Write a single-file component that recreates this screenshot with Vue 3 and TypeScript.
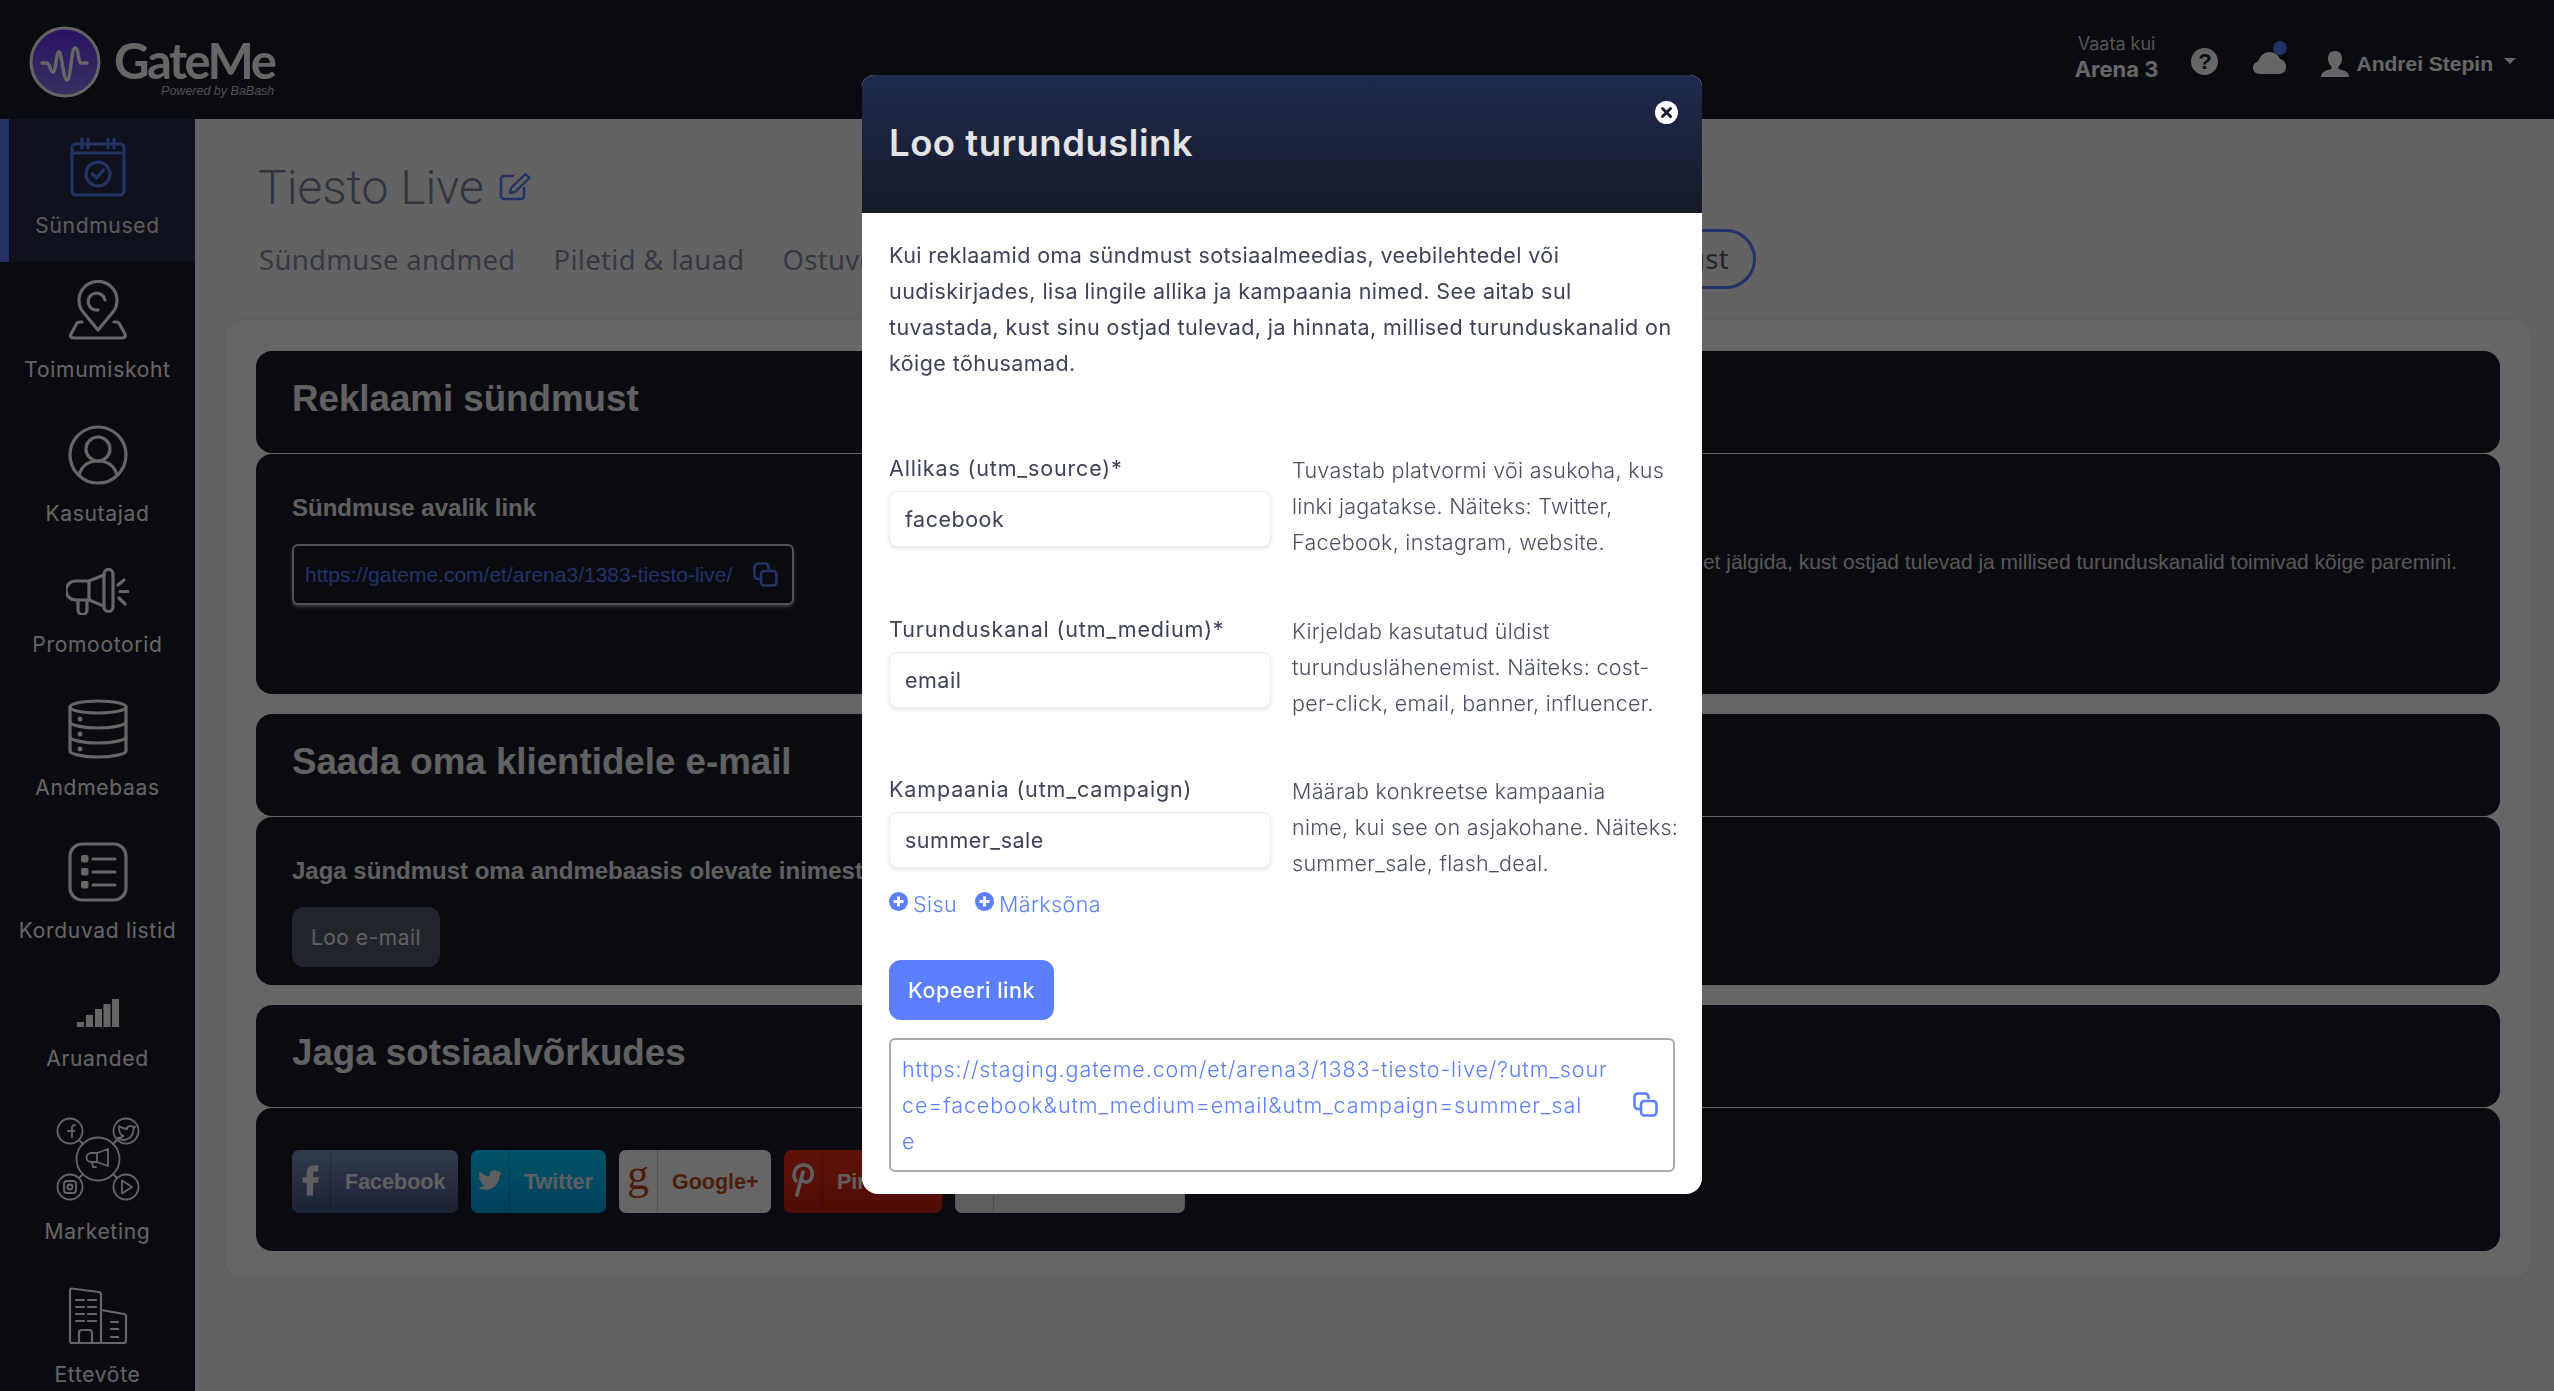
<template>
  <div class="page">
    <header class="topbar">
      <div class="logo">
        <svg width="72" height="72" viewBox="0 0 72 72">
          <defs>
            <linearGradient id="logoFill" x1="0" y1="0" x2="0" y2="1">
              <stop offset="0" stop-color="#6a32ff" />
              <stop offset="1" stop-color="#8f7cf0" />
            </linearGradient>
          </defs>
          <circle cx="36" cy="36" r="34" fill="url(#logoFill)" stroke="#fff" stroke-width="3" opacity="0.98" />
          <path d="M13 37h5c3 0 3 9 6 9s3-20 6-20 4 28 8 28 4-32 8-32 3 15 6 15h6" fill="none" stroke="#fff" stroke-width="3.4" stroke-linecap="round" stroke-linejoin="round" />
        </svg>
        <div class="logo-text">
          <span class="logo-name">GateMe</span>
          <span class="logo-sub">Powered by BaBash</span>
        </div>
      </div>
      <div class="top-right">
        <div class="view-as">
          <span class="view-small">Vaata kui</span>
          <span class="view-big">Arena 3</span>
        </div>
        <span class="help">?</span>
        <div class="cloud">
          <svg width="34" height="24" viewBox="0 0 34 24"><path d="M7 24C2 24 0 21 0 17.500c0-3 2-5.500 5-6C7 6 11 2 16 2c6 0 9 3 11 7 4 1 6 4 6 8 0 4-3 7-7 7z" fill="#fff" /></svg>
          <i class="cloud-dot"></i>
        </div>
        <div class="user">
          <svg width="28" height="26" viewBox="0 0 28 26"><path d="M14 0c4.500 0 7 3 7 7.500 0 3.500-1.500 6.500-3.500 8v2.500C22 19.500 28 20 28 26H0c0-6 6-6.500 10.500-8v-2.500C8.500 14 7 11 7 7.500 7 3 9.500 0 14 0z" fill="#fff" /></svg>
          <span>Andrei Stepin</span>
          <i class="caret"></i>
        </div>
      </div>
    </header>

    <div class="layout">
      <aside class="sidebar">
        <a
          v-for="item in menu"
          :key="item.key"
          class="side-item"
          :class="{ active: item.key === 'events' }"
          :style="{ height: item.height + 'px' }"
        >
          <span class="side-icon" :style="{ height: item.iconBox + 'px' }">
            <svg v-if="item.key === 'events'" width="56" height="60" viewBox="0 0 56 60" class="line">
              <rect x="2" y="7" width="52" height="51" rx="4" />
              <path d="M2 16h52M12 2v9M18 2v9M38 2v9M44 2v9" />
              <circle cx="28" cy="37" r="12" />
              <path d="M22.500 37l4 4 7-8" />
            </svg>
            <svg v-else-if="item.key === 'venue'" width="60" height="60" viewBox="0 0 60 60" class="line">
              <path d="M30 50L15 32a19 19 0 1 1 30 0z" />
              <path d="M37 20a8.500 8.500 0 1 0-7 10" />
              <path d="M14 42h-2c-2 0-3 1-3.500 2L3 54c-1 2 0 4 3 4h48c3 0 4-2 3-4l-5.500-10c-.5-1-1.500-2-3.500-2h-2" />
            </svg>
            <svg v-else-if="item.key === 'users'" width="60" height="60" viewBox="0 0 60 60" class="line">
              <circle cx="30" cy="30" r="28" />
              <circle cx="30" cy="24" r="12" />
              <path d="M11 50c3-10 10-14 19-14s16 4 19 14" />
            </svg>
            <svg v-else-if="item.key === 'promoters'" width="63" height="47" viewBox="0 0 63 47" class="line">
              <path d="M23 13H9.500a9.500 9.500 0 0 0 0 19H23z" />
              <path d="M23 13l15-6M23 32l15 6" />
              <rect x="38" y="1.500" width="9" height="42" rx="4.500" />
              <path d="M12 32v10a4.500 4.500 0 0 0 9 0V32" />
              <path d="M52 17l6-5M54 23.500h8M53 30l6 6" />
            </svg>
            <svg v-else-if="item.key === 'database'" width="60" height="60" viewBox="0 0 60 60" class="line">
              <ellipse cx="30" cy="8" rx="28" ry="6" />
              <path d="M2 8v44c0 3 13 6 28 6s28-3 28-6V8" />
              <path d="M2 23c0 3 13 6 28 6s28-3 28-6M2 38c0 3 13 6 28 6s28-3 28-6" />
              <g class="dots">
                <circle cx="12" cy="20" r="2.500" />
                <circle cx="12" cy="35" r="2.500" />
                <circle cx="12" cy="50" r="2.500" />
              </g>
            </svg>
            <svg v-else-if="item.key === 'lists'" width="60" height="60" viewBox="0 0 60 60" class="line">
              <rect x="2" y="2" width="56" height="56" rx="12" />
              <g class="dots">
                <rect x="13" y="13" width="7.500" height="7.500" rx="2" />
                <rect x="13" y="26" width="7.500" height="7.500" rx="2" />
                <rect x="13" y="39" width="7.500" height="7.500" rx="2" />
              </g>
              <path d="M25 17h22M25 30h22M25 43h22" />
            </svg>
            <svg v-else-if="item.key === 'reports'" width="42" height="28" viewBox="0 0 42 28">
              <rect x="0" y="23" width="7" height="5" fill="#fff" />
              <rect x="9" y="16" width="7" height="12" fill="#fff" />
              <rect x="18" y="10" width="7" height="18" fill="#fff" />
              <rect x="26.500" y="5" width="7" height="23" fill="#fff" />
              <rect x="35" y="0" width="7" height="28" fill="#fff" />
            </svg>
            <svg v-else-if="item.key === 'marketing'" width="84" height="84" viewBox="0 0 84 84" class="line thin">
              <circle cx="42" cy="42" r="21.500" />
              <circle cx="14" cy="14" r="12.500" />
              <circle cx="70" cy="14" r="12.500" />
              <circle cx="14" cy="70" r="12.500" />
              <circle cx="70" cy="70" r="12.500" />
              <path d="M23 23l4 4M61 23l-4 4M23 61l4-4M61 61l-4-4" />
              <path d="M16 20v-9c0-2 1-3 3-3M12 14h6" />
              <path d="M63 9c3 2 5 3 8 3 0-3 4-4 6-2l2-.5-1.500 2.500c0 7-5 11-10 11-2.500 0-4.500-1-6-2 3 0 5-1 6-2-3-1-5-5-4.500-10z" />
              <rect x="8" y="64" width="12" height="12" rx="3" />
              <circle cx="14" cy="70" r="2.500" />
              <path d="M66 63.500l10 6.500-10 6.500z" />
              <path d="M41 36l11-4v17l-11-4zM41 36h-6a4.500 4.500 0 0 0 0 9h6M36 45l1 5h3" />
            </svg>
            <svg v-else width="60" height="58" viewBox="0 0 60 58" class="line slim">
              <path d="M2 3c0-1 .5-1.500 1.500-1.500L31 5c1.500.2 2 1 2 2v49H4c-1.500 0-2-.5-2-2z" />
              <path d="M33 23l23 4c1.500.3 2 1 2 2v25c0 1.500-.5 2-2 2H33" />
              <path d="M8 13h8M20 13h8M8 20h8M20 20h8M8 27h8M20 27h8M8 34h8M20 34h8M43 35h7M43 42h7M43 50h7" />
              <path d="M11 56V46c0-2 1-3 3-3h7c2 0 3 1 3 3v10" />
            </svg>
          </span>
          <span class="side-label">{{ item.label }}</span>
        </a>
      </aside>

      <main class="content">
        <div class="title-row">
          <h1>Tiesto Live</h1>
          <svg width="34" height="30" viewBox="0 0 34 30" class="edit">
            <path d="M15 5H5a3 3 0 0 0-3 3v17a3 3 0 0 0 3 3h17a3 3 0 0 0 3-3V16" fill="none" stroke="currentColor" stroke-width="2.600" />
            <path d="M12 17L26.500 3l4 4L16 21l-5 1z" fill="none" stroke="currentColor" stroke-width="2.400" stroke-linejoin="round" />
          </svg>
        </div>
        <nav class="tabs">
          <span v-for="tab in tabs" :key="tab" class="tab">{{ tab }}</span>
          <span class="tab pill">Reklaami sündmust</span>
        </nav>

        <section class="panel">
          <div class="block">
            <div class="block-head">Reklaami sündmust</div>
            <div class="block-body promo-body">
              <div class="public-link">
                <div class="sub-title">Sündmuse avalik link</div>
                <div class="link-input">
                  <span>https://gateme.com/et/arena3/1383-tiesto-live/</span>
                  <svg width="25" height="25" viewBox="0 0 25 25" class="copy">
                    <path d="M7 17H5a3.500 3.500 0 0 1-3.500-3.500V5A3.500 3.500 0 0 1 5 1.500h7A3.500 3.500 0 0 1 15.500 5v2" />
                    <rect x="8" y="9" width="15.500" height="14.500" rx="3.500" />
                  </svg>
                </div>
              </div>
              <p class="promo-note">Turunduslingi loomine aitab sul täpsemalt, et jälgida, kust ostjad tulevad ja millised turunduskanalid toimivad kõige paremini.</p>
            </div>
          </div>

          <div class="block">
            <div class="block-head">Saada oma klientidele e-mail</div>
            <div class="block-body mail-body">
              <div class="sub-title">Jaga sündmust oma andmebaasis olevate inimestega</div>
              <button class="mail-btn">Loo e-mail</button>
            </div>
          </div>

          <div class="block">
            <div class="block-head">Jaga sotsiaalvõrkudes</div>
            <div class="block-body social-body">
              <a class="social facebook">
                <span class="social-icon">
                  <svg width="26" height="34" viewBox="4 2 16 24"><path d="M14 8h3V3.500h-3c-3 0-5 2-5 5V12H6v4h3v9h4.500v-9h3.500l.5-4h-4V9c0-.6.4-1 .5-1z" fill="currentColor" /></svg>
                </span>
                <span class="social-text">Facebook</span>
              </a>
              <a class="social twitter">
                <span class="social-icon">
                  <svg width="24" height="24" viewBox="0 0 24 24"><path d="M23.953 4.570a10 10 0 01-2.825.775 4.958 4.958 0 002.163-2.723c-.951.555-2.005.959-3.127 1.184a4.920 4.920 0 00-8.384 4.482C7.690 8.095 4.067 6.130 1.640 3.162a4.822 4.822 0 00-.666 2.475c0 1.710.870 3.213 2.188 4.096a4.904 4.904 0 01-2.228-.616v.060a4.923 4.923 0 003.946 4.827 4.996 4.996 0 01-2.212.085 4.936 4.936 0 004.604 3.417 9.867 9.867 0 01-6.102 2.105c-.390 0-.779-.023-1.170-.067a13.995 13.995 0 007.557 2.209c9.053 0 13.998-7.496 13.998-13.985 0-.210 0-.420-.015-.630A9.935 9.935 0 0024 4.590z" fill="currentColor" /></svg>
                </span>
                <span class="social-text">Twitter</span>
              </a>
              <a class="social google">
                <span class="social-icon g-letter">g</span>
                <span class="social-text">Google+</span>
              </a>
              <a class="social pinterest">
                <span class="social-icon">
                  <svg width="24" height="34" viewBox="0 0 24 34"><path d="M5 18C1 13 3 3 12 2c7-.5 10 5 9 11-1 6-7 8-10 4M12 9L6 32" fill="none" stroke="currentColor" stroke-width="3.600" stroke-linecap="round" /></svg>
                </span>
                <span class="social-text">Pinterest</span>
              </a>
              <a class="social other">
                <span class="social-icon"></span>
                <span class="social-text">E-mail</span>
              </a>
            </div>
          </div>
        </section>
      </main>
    </div>

    <div class="backdrop">
      <div class="modal">
        <div class="modal-head">
          <h2>Loo turunduslink</h2>
          <button class="close">
            <svg width="23" height="23" viewBox="0 0 23 23">
              <circle cx="11.500" cy="11.500" r="11.500" fill="#fff" />
              <path d="M7.500 7.500l8 8M15.500 7.500l-8 8" stroke="#1a1f33" stroke-width="3" stroke-linecap="round" />
            </svg>
          </button>
        </div>
        <div class="modal-body">
          <p class="intro">Kui reklaamid oma sündmust sotsiaalmeedias, veebilehtedel või uudiskirjades, lisa lingile allika ja kampaania nimed. See aitab sul tuvastada, kust sinu ostjad tulevad, ja hinnata, millised turunduskanalid on kõige tõhusamad.</p>

          <div v-for="row in fields" :key="row.label" class="field-row">
            <div>
              <label>{{ row.label }}</label>
              <input type="text" :value="row.value" />
            </div>
            <p class="hint">{{ row.hint }}</p>
          </div>

          <div class="extras">
            <a v-for="extra in extras" :key="extra">
              <svg width="19" height="19" viewBox="0 0 19 19">
                <circle cx="9.500" cy="9.500" r="9.500" fill="currentColor" />
                <path d="M9.500 4.500v10M4.500 9.500h10" stroke="#fff" stroke-width="3" />
              </svg>
              {{ extra }}
            </a>
          </div>

          <button class="copy-btn">Kopeeri link</button>

          <div class="result">
            <span class="result-url">{{ resultUrl }}</span>
            <svg width="25" height="25" viewBox="0 0 25 25" class="copy">
              <path d="M7 17H5a3.500 3.500 0 0 1-3.500-3.500V5A3.500 3.500 0 0 1 5 1.500h7A3.500 3.500 0 0 1 15.500 5v2" />
              <rect x="8" y="9" width="15.500" height="14.500" rx="3.500" />
            </svg>
          </div>
        </div>
      </div>
    </div>
  </div>
</template>

<script setup lang="ts">
const menu = [
  { key: "events", label: "Sündmused", height: 143, iconBox: 60 },
  { key: "venue", label: "Toimumiskoht", height: 145, iconBox: 61 },
  { key: "users", label: "Kasutajad", height: 143, iconBox: 60 },
  { key: "promoters", label: "Promootorid", height: 131, iconBox: 48 },
  { key: "database", label: "Andmebaas", height: 143, iconBox: 60 },
  { key: "lists", label: "Korduvad listid", height: 157, iconBox: 60 },
  { key: "reports", label: "Aruanded", height: 118, iconBox: 31 },
  { key: "marketing", label: "Marketing", height: 170, iconBox: 86 },
  { key: "company", label: "Ettevõte", height: 143, iconBox: 59 },
];

const tabs = ["Sündmuse andmed", "Piletid & lauad", "Ostuvorm"];

// line breaks as in the design, the substitute font wraps differently
const fields = [
  {
    label: "Allikas (utm_source)*",
    value: "facebook",
    hint: "Tuvastab platvormi või asukoha, kus\nlinki jagatakse. Näiteks: Twitter,\nFacebook, instagram, website.",
  },
  {
    label: "Turunduskanal (utm_medium)*",
    value: "email",
    hint: "Kirjeldab kasutatud üldist\nturunduslähenemist. Näiteks: cost-\nper-click, email, banner, influencer.",
  },
  {
    label: "Kampaania (utm_campaign)",
    value: "summer_sale",
    hint: "Määrab konkreetse kampaania\nnime, kui see on asjakohane. Näiteks:\nsummer_sale, flash_deal.",
  },
];

const extras = ["Sisu", "Märksõna"];

const resultUrl = [
  "https://staging.gateme.com/et/arena3/1383-tiesto-live/?utm_sour",
  "ce=facebook&utm_medium=email&utm_campaign=summer_sal",
  "e",
].join("\n");
</script>

<style>
html,
body {
  margin: 0;
  background: #f8f8f8;
}
</style>

<style scoped>
.page {
  height: 100vh;
  overflow: hidden;
  display: flex;
  flex-direction: column;
  background: #f8f8f8;
  font-family: "Liberation Sans", Arial, sans-serif;
}

.topbar {
  height: 119px;
  flex: none;
  display: flex;
  justify-content: space-between;
  align-items: center;
  padding: 0 38px 0 29px;
  background: #191d2c;
  color: #fff;
}

.logo {
  display: flex;
  align-items: center;
  gap: 13px;
  margin-top: 4px;
}

.logo-text {
  display: flex;
  flex-direction: column;
  align-items: flex-end;
  padding-top: 12px;
}

.logo-name {
  font-family: Lato, sans-serif;
  font-size: 49px;
  line-height: 44px;
  letter-spacing: -2.500px;
  font-weight: 700;
}

.logo-sub {
  font-style: italic;
  font-size: 12.500px;
  line-height: 14px;
  color: #c8c8c8;
  margin-top: 2px;
}

.top-right {
  display: flex;
  align-items: center;
  padding-top: 8px;
}

.view-as {
  display: flex;
  flex-direction: column;
  align-items: center;
  font-family: Inter, sans-serif;
  margin-right: 33px;
  margin-top: -14px;
}

.view-small {
  font-size: 18px;
  line-height: 24px;
  color: #d0d0d0;
}

.view-big {
  font-size: 22px;
  line-height: 26px;
  font-weight: 700;
}

.help {
  width: 27px;
  height: 27px;
  border-radius: 50%;
  background: #fff;
  color: #191d2c;
  font-size: 22px;
  font-weight: 700;
  line-height: 27px;
  text-align: center;
  margin-right: 35px;
  margin-top: -4px;
}

.cloud {
  position: relative;
  width: 34px;
  height: 24px;
  margin-right: 34px;
  margin-top: -4px;
}

.cloud svg {
  display: block;
}

.cloud-dot {
  position: absolute;
  top: -9px;
  right: 0;
  width: 14px;
  height: 14px;
  border-radius: 50%;
  background: #5b7fff;
}

.user {
  display: flex;
  align-items: center;
  gap: 7px;
  font-size: 21px;
  font-weight: 700;
}

.caret {
  width: 0;
  height: 0;
  border: 6px solid transparent;
  border-top-color: #fff;
  border-bottom-width: 0;
  margin-left: 4px;
  margin-top: -5px;
}

.layout {
  flex: 1;
  display: flex;
  min-height: 0;
}

.sidebar {
  width: 195px;
  flex: none;
  background: #191d2c;
  color: #fff;
  font-family: Inter, sans-serif;
}

.side-item {
  display: flex;
  flex-direction: column;
  align-items: center;
  padding-top: 18px;
  box-sizing: border-box;
}

.side-item.active {
  background: #262b49;
  box-shadow: inset 9px 0 0 #5b7fff;
  color: #e6e6e6;
}

.side-item.active .side-icon {
  color: #5b7fff;
}

.side-icon {
  display: block;
  color: #fff;
}

.side-icon svg {
  display: block;
}

.line {
  fill: none;
  stroke: currentColor;
  stroke-width: 3.200;
  stroke-linecap: round;
  stroke-linejoin: round;
}

.line.thin {
  stroke-width: 1.800;
}

.line.slim {
  stroke-width: 2.200;
}

.dots {
  fill: currentColor;
  stroke: none;
}

.side-label {
  margin-top: 14px;
  font-size: 21px;
  line-height: 30px;
  letter-spacing: 0.700px;
  white-space: nowrap;
}

.content {
  flex: 1;
  min-width: 0;
  padding: 0 23px 0 30px;
}

.title-row {
  display: flex;
  align-items: center;
  gap: 15px;
  margin: 37px 0 0 33px;
  height: 62px;
}

.title-row h1 {
  margin: 0;
  font-family: Roboto, sans-serif;
  font-size: 48px;
  font-weight: 300;
  color: #7d86a0;
}

.edit {
  color: #5b7fff;
  margin-top: -2px;
}

.tabs {
  display: flex;
  align-items: center;
  gap: 38px;
  width: 1497px;
  height: 60px;
  margin: 11px 0 31px 34px;
  font-family: "Noto Sans", sans-serif;
  font-size: 27.500px;
  letter-spacing: 0.300px;
  color: #8890a8;
}

.tab {
  white-space: nowrap;
}

.pill {
  margin-left: auto;
  height: 60px;
  line-height: 54px;
  padding: 0 24px;
  box-sizing: border-box;
  border: 3px solid #5b7fff;
  border-radius: 30px;
  color: #5a6070;
}

.panel {
  padding: 31px 31px 26px;
  border-radius: 18px;
  background: #fff;
  box-shadow: 0 0 4px rgba(0, 0, 0, 0.08);
  display: flex;
  flex-direction: column;
  gap: 20px;
}

.block {
  color: #fff;
}

.block-head {
  height: 102px;
  box-sizing: border-box;
  padding: 0 36px 6px;
  display: flex;
  align-items: center;
  border-radius: 16px;
  background: #191d2c;
  font-size: 36.700px;
  font-weight: 700;
  color: #f2f2f2;
}

.block-body {
  margin-top: 1px;
  border-radius: 16px;
  background: #191d2c;
  box-sizing: border-box;
  padding: 0 36px;
}

.promo-body {
  height: 240px;
  display: flex;
  justify-content: space-between;
}

.public-link {
  padding-top: 40px;
}

.sub-title {
  font-size: 24px;
  line-height: 28px;
  font-weight: 700;
  color: #f0f0f0;
  white-space: nowrap;
}

.link-input {
  width: 502px;
  height: 61px;
  margin-top: 22px;
  box-sizing: border-box;
  padding: 0 14px 0 11px;
  display: flex;
  align-items: center;
  justify-content: space-between;
  border: 2px solid #cfcfcf;
  border-radius: 6px;
  box-shadow: 0 2px 3px rgba(255, 255, 255, 0.5);
  font-size: 21px;
  color: #5b7fff;
}

.copy {
  flex: none;
  fill: none;
  stroke: #5b7fff;
  stroke-width: 2.600;
}

.promo-note {
  margin: 95px 7px 0 0;
  white-space: nowrap;
  font-size: 21px;
  line-height: 26px;
  color: #dcdcdc;
}

.mail-body {
  height: 168px;
  padding-top: 40px;
}

.mail-btn {
  display: block;
  width: 148px;
  height: 60px;
  margin-top: 22px;
  border: 0;
  border-radius: 12px;
  background: #565a6c;
  color: #f0f0f0;
  font-family: Inter, sans-serif;
  font-size: 21px;
  letter-spacing: 0.500px;
}

.social-body {
  height: 143px;
  padding-top: 42px;
  display: flex;
  gap: 13px;
  white-space: nowrap;
}

.social {
  height: 63px;
  display: flex;
  align-items: center;
  border-radius: 7px;
  font-size: 21.500px;
  font-weight: 700;
}

.social-icon {
  width: 38px;
  height: 66px;
  flex: none;
  display: flex;
  align-items: center;
  justify-content: center;
  margin-top: -3px;
  border-right: 1px solid rgba(0, 0, 0, 0.18);
  box-sizing: content-box;
}

.social-text {
  padding: 2px 16px 0 14px;
}

.facebook {
  width: 166px;
  background: linear-gradient(#7b90c3, #465686);
  color: #eee;
}

.twitter {
  width: 135px;
  background: linear-gradient(#00cdff, #009de6);
  color: #eee;
}

.google {
  width: 152px;
  background: #fff;
  color: #bf4a1a;
}

.g-letter {
  font-family: "Liberation Serif", serif;
  font-size: 44px;
  font-weight: 400;
  padding-bottom: 12px;
  height: 54px;
}

.pinterest {
  width: 158px;
  background: linear-gradient(#ec3014, #c82012);
  color: #eee;
}

.other {
  width: 230px;
  background: #ececec;
  color: #fff;
}

.backdrop {
  position: fixed;
  inset: 0;
  display: flex;
  justify-content: center;
  align-items: flex-start;
  padding-left: 10px;
  box-sizing: border-box;
  background: rgba(0, 0, 0, 0.6);
}

.modal {
  width: 840px;
  height: 1119px;
  margin-top: 75px;
  border-radius: 12px 12px 16px 16px;
  overflow: hidden;
  background: #fff;
  font-family: Inter, sans-serif;
  color: #3d4258;
}

.modal-head {
  position: relative;
  height: 138px;
  box-sizing: border-box;
  padding: 42px 27px 0;
  background: linear-gradient(#1f2a4f, #161a28);
  color: #e4e4e4;
}

.modal-head h2 {
  margin: 0;
  font-size: 36.500px;
  line-height: 52px;
  font-weight: 600;
  letter-spacing: 0.500px;
}

.close {
  position: absolute;
  top: 26px;
  right: 24px;
  padding: 0;
  border: 0;
  background: none;
  height: 23px;
}

.modal-body {
  padding: 24px 27px 0;
}

.intro {
  margin: 0 0 69px;
  font-size: 21.500px;
  line-height: 36px;
  letter-spacing: 0.420px;
  width: 790px;
}

.field-row {
  display: grid;
  grid-template-columns: 382px 1fr;
  column-gap: 21px;
  height: 160.500px;
}

.field-row label {
  display: block;
  height: 36px;
  line-height: 36px;
  font-size: 21.500px;
  letter-spacing: 0.850px;
}

.field-row input {
  display: block;
  width: 100%;
  height: 56px;
  margin-top: 5px;
  padding: 0 15px;
  box-sizing: border-box;
  border: 1px solid #ececec;
  border-radius: 8px;
  box-shadow: 0 2px 4px rgba(0, 0, 0, 0.1);
  font-family: Inter, sans-serif;
  font-size: 21.500px;
  letter-spacing: 0.500px;
  color: #3d4258;
  outline: 0;
}

.hint {
  margin: 2px 0 0;
  font-size: 21.500px;
  line-height: 36px;
  letter-spacing: 0.300px;
  font-weight: 300;
  color: #4a4f63;
  white-space: pre;
}

.extras {
  display: flex;
  gap: 18px;
  margin-top: -46px;
  height: 36px;
  align-items: center;
  color: #5b7fff;
  font-size: 21.500px;
  letter-spacing: 0.400px;
  font-weight: 300;
}

.extras a {
  display: flex;
  align-items: center;
  gap: 5px;
}

.extras svg {
  flex: none;
  margin-top: -5px;
}

.copy-btn {
  display: block;
  width: 165px;
  height: 60px;
  margin-top: 38px;
  border: 0;
  border-radius: 12px;
  background: #5b7fff;
  color: #fff;
  font-family: Inter, sans-serif;
  font-size: 21.500px;
  font-weight: 500;
  letter-spacing: 0.500px;
}

.result {
  display: flex;
  align-items: center;
  justify-content: space-between;
  height: 134px;
  margin-top: 18px;
  padding: 0 15px 0 11px;
  box-sizing: border-box;
  border: 2px solid #aaa;
  border-radius: 6px;
  color: #5b7fff;
}

.result-url {
  width: 709px;
  font-size: 21.500px;
  line-height: 36px;
  letter-spacing: 0.900px;
  font-weight: 300;
  white-space: pre;
}
</style>
